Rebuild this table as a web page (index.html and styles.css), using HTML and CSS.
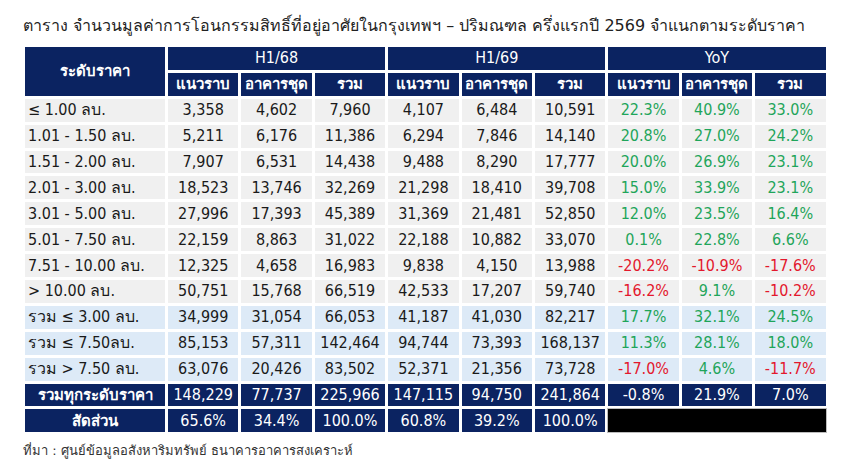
FILE: index.html
```html
<!DOCTYPE html>
<html lang="th">
<head>
<meta charset="utf-8">
<link rel="stylesheet" href="styles.css">
</head>
<body>
<div class="page">
  <h1 class="title">ตาราง จำนวนมูลค่าการโอนกรรมสิทธิ์ที่อยู่อาศัยในกรุงเทพฯ – ปริมณฑล ครึ่งแรกปี 2569 จำแนกตามระดับราคา</h1>
  <table class="data">
    <colgroup>
      <col class="c-first">
      <col class="c-num"><col class="c-num"><col class="c-num">
      <col class="c-num"><col class="c-num"><col class="c-num">
      <col class="c-num"><col class="c-num"><col class="c-num">
    </colgroup>
    <thead>
      <tr>
        <th rowspan="2" class="h-main">ระดับราคา</th>
        <th colspan="3" class="h-group">H1/68</th>
        <th colspan="3" class="h-group">H1/69</th>
        <th colspan="3" class="h-group">YoY</th>
      </tr>
      <tr>
        <th>แนวราบ</th><th>อาคารชุด</th><th>รวม</th>
        <th>แนวราบ</th><th>อาคารชุด</th><th>รวม</th>
        <th>แนวราบ</th><th>อาคารชุด</th><th>รวม</th>
      </tr>
    </thead>
    <tbody>
      <tr class="r-gray"><td class="lbl">≤ 1.00 ลบ.</td><td>3,358</td><td>4,602</td><td>7,960</td><td>4,107</td><td>6,484</td><td>10,591</td><td class="up">22.3%</td><td class="up">40.9%</td><td class="up">33.0%</td></tr>
      <tr class="r-gray"><td class="lbl">1.01 - 1.50 ลบ.</td><td>5,211</td><td>6,176</td><td>11,386</td><td>6,294</td><td>7,846</td><td>14,140</td><td class="up">20.8%</td><td class="up">27.0%</td><td class="up">24.2%</td></tr>
      <tr class="r-gray"><td class="lbl">1.51 - 2.00 ลบ.</td><td>7,907</td><td>6,531</td><td>14,438</td><td>9,488</td><td>8,290</td><td>17,777</td><td class="up">20.0%</td><td class="up">26.9%</td><td class="up">23.1%</td></tr>
      <tr class="r-gray"><td class="lbl">2.01 - 3.00 ลบ.</td><td>18,523</td><td>13,746</td><td>32,269</td><td>21,298</td><td>18,410</td><td>39,708</td><td class="up">15.0%</td><td class="up">33.9%</td><td class="up">23.1%</td></tr>
      <tr class="r-gray"><td class="lbl">3.01 - 5.00 ลบ.</td><td>27,996</td><td>17,393</td><td>45,389</td><td>31,369</td><td>21,481</td><td>52,850</td><td class="up">12.0%</td><td class="up">23.5%</td><td class="up">16.4%</td></tr>
      <tr class="r-gray"><td class="lbl">5.01 - 7.50 ลบ.</td><td>22,159</td><td>8,863</td><td>31,022</td><td>22,188</td><td>10,882</td><td>33,070</td><td class="up">0.1%</td><td class="up">22.8%</td><td class="up">6.6%</td></tr>
      <tr class="r-gray"><td class="lbl">7.51 - 10.00 ลบ.</td><td>12,325</td><td>4,658</td><td>16,983</td><td>9,838</td><td>4,150</td><td>13,988</td><td class="down">-20.2%</td><td class="down">-10.9%</td><td class="down">-17.6%</td></tr>
      <tr class="r-gray"><td class="lbl">&gt; 10.00 ลบ.</td><td>50,751</td><td>15,768</td><td>66,519</td><td>42,533</td><td>17,207</td><td>59,740</td><td class="down">-16.2%</td><td class="up">9.1%</td><td class="down">-10.2%</td></tr>
      <tr class="r-blue"><td class="lbl">รวม ≤ 3.00 ลบ.</td><td>34,999</td><td>31,054</td><td>66,053</td><td>41,187</td><td>41,030</td><td>82,217</td><td class="up">17.7%</td><td class="up">32.1%</td><td class="up">24.5%</td></tr>
      <tr class="r-blue"><td class="lbl">รวม ≤ 7.50ลบ.</td><td>85,153</td><td>57,311</td><td>142,464</td><td>94,744</td><td>73,393</td><td>168,137</td><td class="up">11.3%</td><td class="up">28.1%</td><td class="up">18.0%</td></tr>
      <tr class="r-blue"><td class="lbl">รวม &gt; 7.50 ลบ.</td><td>63,076</td><td>20,426</td><td>83,502</td><td>52,371</td><td>21,356</td><td>73,728</td><td class="down">-17.0%</td><td class="up">4.6%</td><td class="down">-11.7%</td></tr>
      <tr class="r-navy"><td class="lbl-c">รวมทุกระดับราคา</td><td>148,229</td><td>77,737</td><td>225,966</td><td>147,115</td><td>94,750</td><td>241,864</td><td>-0.8%</td><td>21.9%</td><td>7.0%</td></tr>
      <tr class="r-navy"><td class="lbl-c">สัดส่วน</td><td>65.6%</td><td>34.4%</td><td>100.0%</td><td>60.8%</td><td>39.2%</td><td>100.0%</td><td colspan="3" class="blank"></td></tr>
    </tbody>
  </table>
  <p class="source">ที่มา : ศูนย์ข้อมูลอสังหาริมทรัพย์ ธนาคารอาคารสงเคราะห์</p>
</div>
</body>
</html>
```

FILE: styles.css
```css
html, body {
  margin: 0;
  padding: 0;
  background: #ffffff;
}
body {
  font-family: "DejaVu Sans Condensed", "Liberation Sans", sans-serif;
  color: #1a1a1a;
}
.page {
  width: 850px;
  height: 473px;
  padding: 14px 0 0 22px;
  box-sizing: border-box;
}
.title {
  margin: 0 0 6px 1px;
  font-family: "DejaVu Sans", "Noto Sans", sans-serif;
  font-size: 16px;
  font-weight: normal;
  line-height: 24px;
  color: #222222;
  white-space: nowrap;
}
.data {
  border-collapse: separate;
  border-spacing: 3px;
  table-layout: fixed;
  width: 805px;
}
.c-first { width: 140px; }
.c-num { width: 70.4px; }
.data th, .data td {
  height: 22.9px;
  padding: 0 2px;
  box-sizing: border-box;
  text-align: center;
  font-size: 16px;
  line-height: 20px;
  white-space: nowrap;
  overflow: hidden;
}
.data th {
  background: #0b2361;
  color: #ffffff;
  font-weight: bold;
  font-size: 15px;
}
.data th.h-group {
  font-weight: normal;
  font-size: 16px;
}
.r-gray td { background: #f0f0f0; }
.r-blue td { background: #ddeaf7; }
.r-navy td {
  background: #0b2361;
  color: #ffffff;
}
.data td.lbl {
  text-align: left;
  padding-left: 3px;
}
.data td.lbl-c {
  font-weight: bold;
  font-size: 15px;
}
.up { color: #1fa55a; }
.down { color: #e3182d; }
.r-navy td.blank {
  background: #000000;
  outline: 1px solid #bdbdbd;
}
.source {
  margin: 7px 0 0 1px;
  font-family: "DejaVu Sans", "Noto Sans", sans-serif;
  font-size: 13px;
  line-height: 18px;
  color: #333333;
}
```
